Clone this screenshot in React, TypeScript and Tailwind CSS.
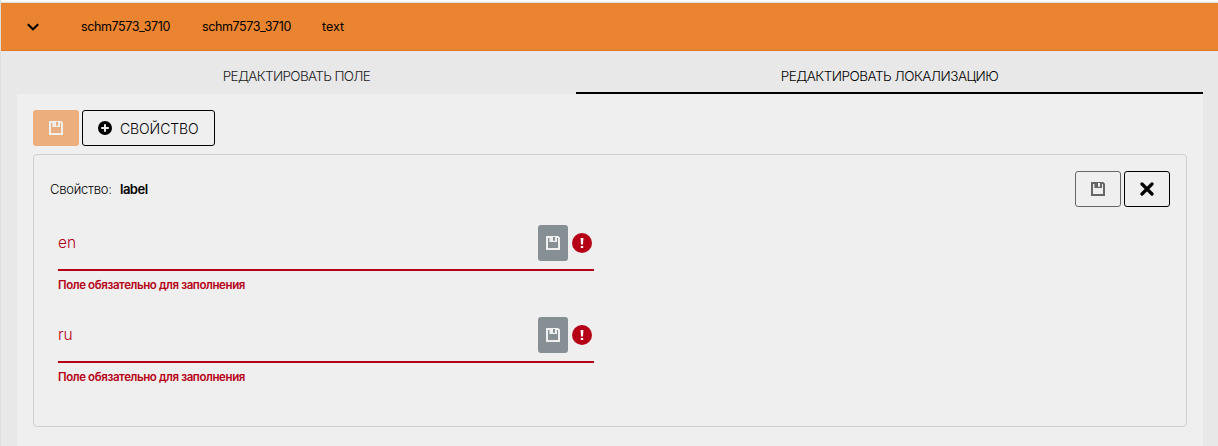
import React, { useState } from 'react';

const SaveIcon = () => (
  <svg width="14" height="14" viewBox="0 0 14 14" fill="none">
    <path
      fill="currentColor"
      fillRule="evenodd"
      d="M0 0H12.3L14 1.7V14H0ZM2 2V12H12V2H11V6H3.4V2ZM7 1H9V4.8H7Z"
    />
  </svg>
);

const PlusIcon = () => (
  <svg width="14" height="14" viewBox="0 0 14 14">
    <circle cx="7" cy="7" r="7" fill="currentColor" />
    <path d="M7 3.2v7.6M3.2 7h7.6" stroke="#efefef" strokeWidth="2" />
  </svg>
);

const CloseIcon = () => (
  <svg width="14" height="14" viewBox="0 0 14 14">
    <path d="M2 2l10 10M12 2L2 12" stroke="currentColor" strokeWidth="3.2" strokeLinecap="round" />
  </svg>
);

const ErrorIcon = () => (
  <svg width="20" height="20" viewBox="0 0 20 20">
    <circle cx="10" cy="10" r="10" fill="#b50015" />
    <path d="M8.6 5h2.8l-.4 6.5H9ZM8.8 13h2.4v2H8.8Z" fill="#fff" />
  </svg>
);

const LocaleField = ({ locale }: { locale: string }) => (
  <div className="h-[92px] w-[536px] text-[#b50015]">
    <div className="flex h-[46px] items-start border-b-2 border-[#b50015]">
      <label className="flex-1 text-[15.5px] font-[350] leading-9">{locale}</label>
      <button className="mr-1 flex h-9 w-[30px] items-center justify-center rounded-[3px] bg-[#868f94] text-[#efefef]">
        <SaveIcon />
      </button>
      <div className="mr-0.5 flex h-9 items-center">
        <ErrorIcon />
      </div>
    </div>
    <p className="pt-1.5 text-[11.5px] font-semibold leading-4 tracking-[-0.4px]">Поле обязательно для заполнения</p>
  </div>
);

const App = () => {
  const [activeTab, setActiveTab] = useState('locale');

  return (
    <div className="h-[446px] overflow-hidden border-l border-[#dedede] bg-[#e8e8e8] font-['Inter','Liberation_Sans',sans-serif] text-black">
      <div className="h-[3px] border-b border-[#dedede] bg-[#fafafa]" />

      {/* Row header */}
      <div className="flex h-12 items-center border-b border-[#db7a2c] bg-[#ea8431] pl-[26px] text-[12.5px]">
        <svg className="mr-[42px]" width="12" height="8" viewBox="0 0 12 8" fill="none">
          <path d="M.8 1.3l5.2 5 5.2-5" stroke="currentColor" strokeWidth="2" />
        </svg>
        <span className="w-[121px] pt-px tracking-[-0.4px]">schm7573_3710</span>
        <span className="w-[120px] pt-px tracking-[-0.4px]">schm7573_3710</span>
        <span className="pt-px">text</span>
      </div>

      <div className="pl-4 pr-[15px]">
        {/* Tabs */}
        <div className="flex h-[43px] text-[13.5px] font-[350]">
          <button
            onClick={() => setActiveTab('field')}
            className={`w-[559px] border-b-2 pt-[9px] tracking-[-0.65px] ${activeTab === 'field' ? 'border-black' : 'border-transparent text-[#222]'}`}
          >
            РЕДАКТИРОВАТЬ ПОЛЕ
          </button>
          <button
            onClick={() => setActiveTab('locale')}
            className={`flex-1 border-b-2 pt-[9px] tracking-[-0.5px] ${activeTab === 'locale' ? 'border-black' : 'border-transparent text-[#222]'}`}
          >
            РЕДАКТИРОВАТЬ ЛОКАЛИЗАЦИЮ
          </button>
        </div>

        <div className="h-[352px] bg-[#efefef] px-4 pt-4">
          <div className="mb-2 flex gap-[3px]">
            <button className="flex h-9 w-[46px] items-center justify-center rounded-[3px] bg-[#edae7d] text-[#efefef]">
              <SaveIcon />
            </button>
            <button className="flex h-9 w-[133px] items-center gap-2 rounded-[3px] border border-black pl-[15px] text-[14px] font-[350]">
              <PlusIcon />
              <span className="tracking-[-0.1px]">СВОЙСТВО</span>
            </button>
          </div>

          {/* Property card */}
          <div className="h-[273px] rounded border border-[#cfcfcf] p-4">
            <div className="flex items-center gap-[3px]">
              <div className="flex flex-1 gap-2 pt-[2px] text-[13px]">
                <span className="w-[62px] font-[350] tracking-[-0.25px]">Свойство:</span>
                <span className="font-semibold tracking-[-0.5px]">label</span>
              </div>
              <button className="flex h-9 w-[46px] items-center justify-center rounded-[3px] border border-[#666] text-[#666]">
                <SaveIcon />
              </button>
              <button className="flex h-9 w-[46px] items-center justify-center rounded-[3px] border border-black">
                <CloseIcon />
              </button>
            </div>
            <div className="pl-2 pt-[18px]">
              <LocaleField locale="en" />
              <LocaleField locale="ru" />
            </div>
          </div>
        </div>
      </div>
    </div>
  );
};

export default App;
